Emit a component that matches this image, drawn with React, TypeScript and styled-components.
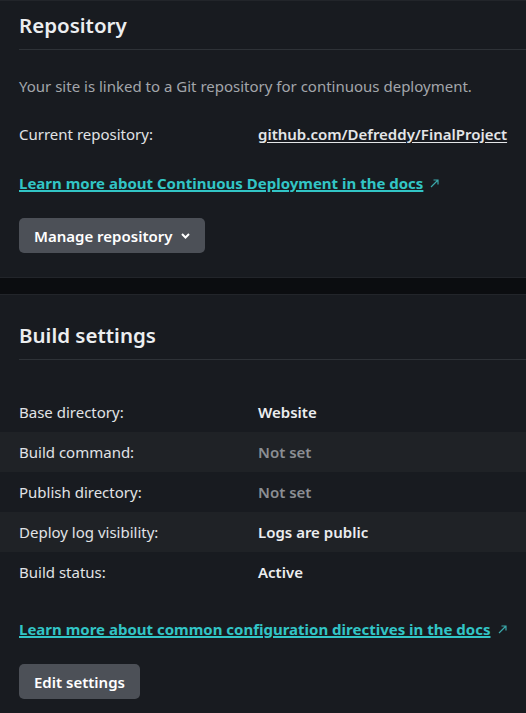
import React from "react";
import styled, { createGlobalStyle } from "styled-components";

const GlobalStyle = createGlobalStyle`
    html, body {
        margin: 0;
        padding: 0;
        background: #0b0d10;
    }
    body {
        font-family: "Noto Sans", "Open Sans", Arial, sans-serif;
        color: #e4e6e8;
        -webkit-font-smoothing: antialiased;
    }
`;

const Page = styled.div`
    display: flex;
    flex-direction: column;
    gap: 16px;
    width: 526px;
    height: 713px;
    overflow: hidden;
`;

const Panel = styled.section<{ $top?: number }>`
    background: #181b20;
    border-top: 1px solid #22252a;
    border-bottom: 1px solid #22252a;
    padding-top: ${(p) => p.$top ?? 25}px;
    padding-bottom: 24px;
    display: flex;
    flex-direction: column;
`;

const Heading = styled.h2`
    margin: 0 0 0 19px;
    padding-bottom: 10px;
    border-bottom: 1px solid #2e3237;
    font-size: 20.5px;
    line-height: 28px;
    font-weight: 600;
    color: #eceef0;
`;

const Text = styled.p`
    margin: 25px 0 0 19px;
    font-size: 15px;
    line-height: 22px;
    color: #a3a6ab;
`;

const InfoRow = styled.div`
    display: grid;
    grid-template-columns: 239px 1fr;
    margin: 26px 0 0 19px;
    font-size: 15px;
    line-height: 22px;
`;

const Label = styled.span`
    color: #e1e3e6;
`;

const RepoLink = styled.a`
    color: #e4e6e8;
    font-weight: 600;
    text-decoration: underline;
    text-underline-offset: 2px;
`;

const DocsLink = styled.a<{ $gap: number }>`
    display: flex;
    align-items: center;
    gap: 6px;
    margin: ${(p) => p.$gap}px 0 0 19px;
    font-size: 15px;
    line-height: 22px;
    font-weight: 700;
    color: #32c5c6;
    span {
        text-decoration: underline;
        text-underline-offset: 2px;
    }
`;

const Button = styled.button`
    align-self: flex-start;
    display: flex;
    align-items: center;
    gap: 9px;
    margin: 24px 0 0 19px;
    height: 35px;
    padding: 0 15px;
    border: none;
    border-radius: 5px;
    background: #4c5057;
    color: #ffffff;
    font-family: inherit;
    font-size: 15px;
    font-weight: 600;
`;

const Table = styled.div`
    display: flex;
    flex-direction: column;
    margin-top: 32px;
`;

const Row = styled.div`
    display: grid;
    grid-template-columns: 239px 1fr;
    align-items: center;
    height: 40px;
    padding-left: 19px;
    font-size: 15px;
    &:nth-child(even) {
        background: #1f2226;
    }
`;

const Value = styled.span<{ $muted?: boolean }>`
    font-weight: 600;
    color: ${(p) => (p.$muted ? "#8b8e93" : "#eceef0")};
`;

const ExternalIcon = () => (
    <svg width="11" height="11" viewBox="0 0 11 11" fill="none">
        <path d="M2 9L9 2M4.5 2H9V6.5" stroke="#3aa8aa" strokeWidth="1.2" />
    </svg>
);

const Chevron = () => (
    <svg width="9" height="6" viewBox="0 0 9 6" fill="none">
        <path d="M1 1L4.5 4.5L8 1" stroke="#ffffff" strokeWidth="2" />
    </svg>
);

const rows = [
    { label: "Base directory:", value: "Website" },
    { label: "Build command:", value: "Not set", muted: true },
    { label: "Publish directory:", value: "Not set", muted: true },
    { label: "Deploy log visibility:", value: "Logs are public" },
    { label: "Build status:", value: "Active" },
];

export default function App() {
    return (
        <>
            <GlobalStyle />
            <Page>
                <Panel $top={10}>
                    <Heading>Repository</Heading>
                    <Text>Your site is linked to a Git repository for continuous deployment.</Text>
                    <InfoRow>
                        <Label>Current repository:</Label>
                        <RepoLink href="#">github.com/Defreddy/FinalProject</RepoLink>
                    </InfoRow>
                    <DocsLink href="#" $gap={27}>
                        <span>Learn more about Continuous Deployment in the docs</span>
                        <ExternalIcon />
                    </DocsLink>
                    <Button>
                        Manage repository
                        <Chevron />
                    </Button>
                </Panel>
                <Panel $top={26}>
                    <Heading>Build settings</Heading>
                    <Table>
                        {rows.map((r) => (
                            <Row key={r.label}>
                                <Label>{r.label}</Label>
                                <Value $muted={r.muted}>{r.value}</Value>
                            </Row>
                        ))}
                    </Table>
                    <DocsLink href="#" $gap={26}>
                        <span>Learn more about common configuration directives in the docs</span>
                        <ExternalIcon />
                    </DocsLink>
                    <Button>Edit settings</Button>
                </Panel>
            </Page>
        </>
    );
}
